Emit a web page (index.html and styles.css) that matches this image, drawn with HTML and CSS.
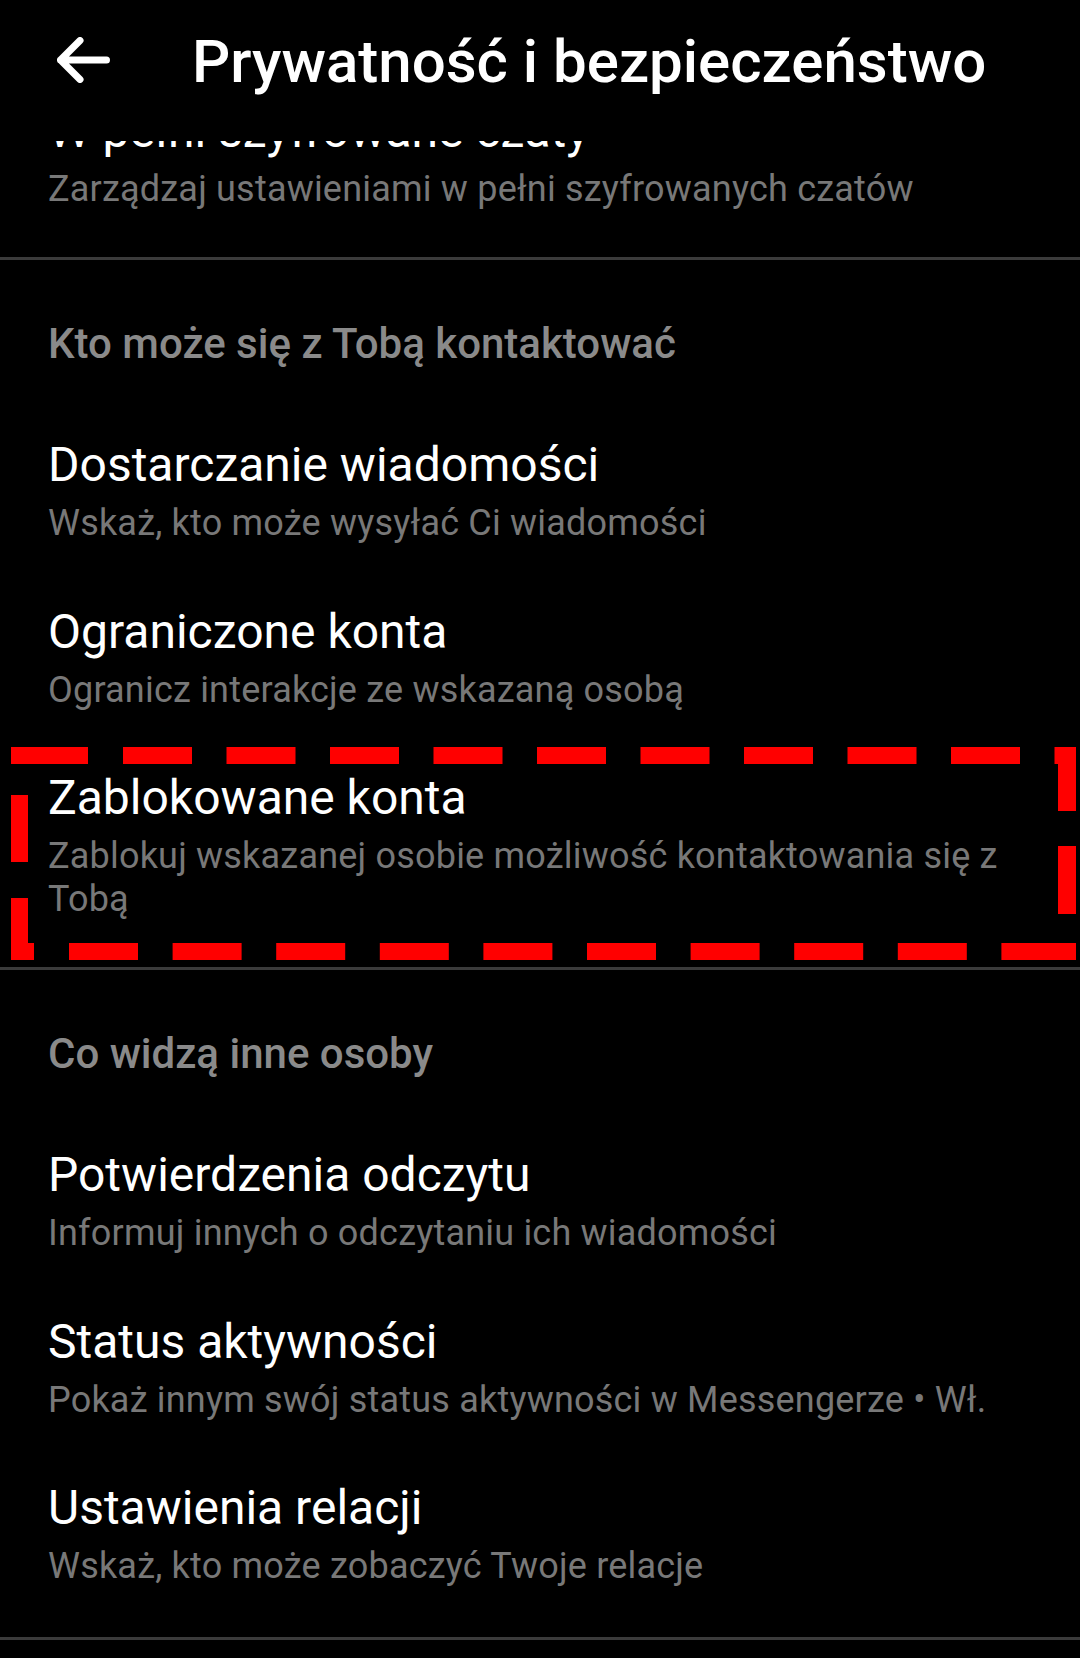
FILE: index.html
```html
<!DOCTYPE html>
<html lang="pl">
<head>
<meta charset="utf-8">
<title>Prywatność i bezpieczeństwo</title>
<link rel="stylesheet" href="styles.css">
</head>
<body>
<div class="screen">
  <header class="appbar">
    <svg class="back" viewBox="0 0 53 46" width="53" height="46" aria-hidden="true">
      <path d="M49.5 23H3.5M23 3.5L3.5 23L23 42.5" fill="none" stroke="#fff" stroke-width="7" stroke-linecap="round" stroke-linejoin="round"/>
    </svg>
    <h1 class="appbar-title">Prywatność i bezpieczeństwo</h1>
  </header>

  <main class="list">
    <section class="group">
      <div class="item item-clipped">
        <div class="item-title">W pełni szyfrowane czaty</div>
        <div class="item-sub">Zarządzaj ustawieniami w pełni szyfrowanych czatów</div>
      </div>
    </section>
    <hr class="divider">

    <section class="group">
      <h2 class="group-title">Kto może się z Tobą kontaktować</h2>
      <div class="item">
        <div class="item-title">Dostarczanie wiadomości</div>
        <div class="item-sub">Wskaż, kto może wysyłać Ci wiadomości</div>
      </div>
      <div class="item">
        <div class="item-title">Ograniczone konta</div>
        <div class="item-sub">Ogranicz interakcje ze wskazaną osobą</div>
      </div>
      <div class="item">
        <div class="item-title">Zablokowane konta</div>
        <div class="item-sub">Zablokuj wskazanej osobie możliwość kontaktowania się z Tobą</div>
      </div>
    </section>
    <hr class="divider">

    <section class="group group-last">
      <h2 class="group-title">Co widzą inne osoby</h2>
      <div class="item">
        <div class="item-title">Potwierdzenia odczytu</div>
        <div class="item-sub">Informuj innych o odczytaniu ich wiadomości</div>
      </div>
      <div class="item">
        <div class="item-title">Status aktywności</div>
        <div class="item-sub">Pokaż innym swój status aktywności w Messengerze • Wł.</div>
      </div>
      <div class="item">
        <div class="item-title">Ustawienia relacji</div>
        <div class="item-sub">Wskaż, kto może zobaczyć Twoje relacje</div>
      </div>
    </section>
    <hr class="divider">
  </main>

  <svg class="highlight" viewBox="0 0 1080 1658" width="1080" height="1658" aria-hidden="true">
    <g fill="#ff0000">
      <rect x="11" y="747" width="77" height="17"/>
      <rect x="123" y="747" width="69" height="17"/>
      <rect x="226.5" y="747" width="69" height="17"/>
      <rect x="330" y="747" width="69" height="17"/>
      <rect x="433.5" y="747" width="69" height="17"/>
      <rect x="537" y="747" width="69" height="17"/>
      <rect x="640.5" y="747" width="69" height="17"/>
      <rect x="744" y="747" width="69" height="17"/>
      <rect x="847.5" y="747" width="69" height="17"/>
      <rect x="951" y="747" width="69" height="17"/>
      <rect x="1054.5" y="747" width="21.5" height="17"/>
      <rect x="1058" y="747" width="18" height="64"/>
      <rect x="1058" y="846" width="18" height="68"/>
      <rect x="11" y="943" width="23" height="17"/>
      <rect x="69" y="943" width="69" height="17"/>
      <rect x="172.6" y="943" width="69" height="17"/>
      <rect x="276.2" y="943" width="69" height="17"/>
      <rect x="379.8" y="943" width="69" height="17"/>
      <rect x="483.4" y="943" width="69" height="17"/>
      <rect x="587" y="943" width="69" height="17"/>
      <rect x="690.6" y="943" width="69" height="17"/>
      <rect x="794.2" y="943" width="69" height="17"/>
      <rect x="897.8" y="943" width="69" height="17"/>
      <rect x="1001.4" y="943" width="74.6" height="17"/>
      <rect x="11" y="795" width="17" height="67"/>
      <rect x="11" y="898" width="17" height="62"/>
    </g>
  </svg>
</div>
</body>
</html>
```

FILE: styles.css
```css
html, body {
  margin: 0;
  padding: 0;
  background: #000;
}

body {
  font-family: Roboto, "Noto Sans", "Liberation Sans", sans-serif;
  color: #fff;
}

.screen {
  position: relative;
  width: 1080px;
  height: 1658px;
  overflow: hidden;
  background: #000;
  display: flex;
  flex-direction: column;
}

.appbar {
  position: relative;
  z-index: 2;
  flex: 0 0 auto;
  height: 141px;
  box-sizing: border-box;
  padding: 27px 0 0 57px;
  display: flex;
  align-items: flex-start;
  background: #000;
}

.back {
  display: block;
  margin-top: 10px;
  flex: 0 0 auto;
}

.appbar-title {
  margin: 0 0 0 82px;
  font-size: 60px;
  line-height: 70px;
  font-weight: 500;
  color: #fff;
  white-space: nowrap;
}

.list {
  position: relative;
  z-index: 1;
  flex: 1 1 auto;
  display: flex;
  flex-direction: column;
}

.group {
  display: flex;
  flex-direction: column;
  padding-bottom: 17.5px;
}

.group-last {
  padding-bottom: 20px;
}

.group-title {
  margin: 59.5px 0 38px 0;
  padding: 0 48px;
  font-size: 42px;
  line-height: 50px;
  font-weight: 500;
  color: #8a8a8a;
}

.item {
  padding: 30px 60px 29px 48px;
  display: flex;
  flex-direction: column;
}

.item-clipped {
  margin-top: -68.26px;
}

.item-title {
  font-size: 48px;
  line-height: 56px;
  font-weight: 400;
  color: #fff;
}

.item-sub {
  margin-top: 9px;
  font-size: 36px;
  line-height: 42.5px;
  font-weight: 400;
  letter-spacing: 0.2px;
  color: #787878;
}

.divider {
  margin: 0;
  border: 0;
  height: 3px;
  background: #3b3b3b;
  flex: 0 0 auto;
}

.highlight {
  position: absolute;
  top: 0;
  left: 0;
  z-index: 3;
  pointer-events: none;
}
```
